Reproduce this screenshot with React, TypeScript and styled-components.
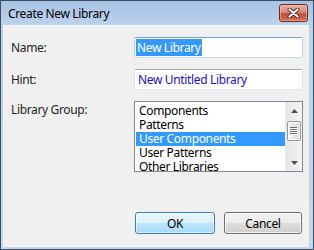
import React from "react";
import styled, { createGlobalStyle } from "styled-components";

const GlobalStyle = createGlobalStyle`
  html, body { margin: 0; padding: 0; background: #ffffff; }
  body { font-family: "Noto Sans", "Open Sans", sans-serif; font-size: 12px; color: #000; letter-spacing: -0.35px; }
  * { box-sizing: border-box; }
`;

const Window = styled.div`
  width: 314px;
  height: 250px;
  display: flex;
  flex-direction: column;
  border: 1px solid #3b4d63;
  padding: 0 4px 2px 2px;
  background: linear-gradient(to bottom, #a7c2e3 0px, #bcd2ec 24px, #c3d8ef 100%);
`;

const TitleBar = styled.div`
  height: 24px;
  display: flex;
  align-items: flex-start;
  justify-content: space-between;
  padding-left: 5px;
`;

const TitleText = styled.div`
  font-size: 12px;
  line-height: 16px;
  margin-top: 5px;
  color: #000;
`;

const CloseButton = styled.div`
  width: 29px;
  height: 18px;
  margin-top: 3px;
  margin-right: 1px;
  border: 1px solid #6e2a22;
  border-radius: 3px;
  background: linear-gradient(to bottom, #eab0a2 0%, #d98a78 45%, #c6503c 55%, #d06c54 100%);
  box-shadow: inset 0 0 0 1px rgba(255, 210, 200, 0.5);
  display: flex;
  align-items: center;
  justify-content: center;
`;

const Client = styled.div`
  flex: 1;
  background: #f0f0f0;
  display: flex;
  flex-direction: column;
  padding: 12px 6px 13px 8px;
`;

const Form = styled.div`
  display: grid;
  grid-template-columns: 123px 169px;
  row-gap: 11px;
`;

const Label = styled.div<{ $top?: boolean }>`
  font-size: 12px;
  line-height: 16px;
  align-self: ${(p) => (p.$top ? "start" : "center")};
  padding-top: ${(p) => (p.$top ? "1px" : "0")};
  color: #1e1e1e;
`;

const TextBox = styled.div<{ $focused?: boolean }>`
  height: 21px;
  border: 1px solid;
  border-radius: 2px;
  border-color: ${(p) =>
    p.$focused ? "#6fa6d6 #b5d3ec #c5def2 #b5d3ec" : "#abadb3 #dbdfe6 #e3e9ef #e2e3ea"};
  background: #ffffff;
  display: flex;
  align-items: center;
  padding-left: 1px;
  font-size: 12px;
`;

const Selected = styled.span`
  background: #3399ff;
  color: #ffffff;
  line-height: 17px;
  padding: 0 1px;
`;

const HintText = styled.span`
  color: #2211bb;
  line-height: 17px;
  padding-left: 2px;
`;

const ListBox = styled.div`
  height: 71px;
  border: 1px solid #828790;
  background: #ffffff;
  display: flex;
  overflow: hidden;
`;

const Items = styled.div`
  flex: 1;
  padding: 2px 0 0 1px;
  overflow: hidden;
`;

const Item = styled.div<{ $selected?: boolean }>`
  height: 14px;
  line-height: 14px;
  padding-left: 3px;
  font-size: 12px;
  white-space: nowrap;
  background: ${(p) => (p.$selected ? "#3399ff" : "transparent")};
  color: ${(p) => (p.$selected ? "#ffffff" : "#000000")};
`;

const ScrollBar = styled.div`
  width: 17px;
  display: flex;
  flex-direction: column;
  background: linear-gradient(to right, #e6e6e6, #f4f4f4);
  border-left: 1px solid #e9e9e9;
`;

const ArrowButton = styled.div`
  height: 17px;
  display: flex;
  align-items: center;
  justify-content: center;
`;

const Track = styled.div`
  flex: 1;
  display: flex;
  flex-direction: column;
  align-items: center;
`;

const Thumb = styled.div`
  width: 14px;
  height: 20px;
  margin-top: 2px;
  border: 1px solid #979797;
  border-radius: 2px;
  background: linear-gradient(to right, #f4f4f4, #e4e4e4 60%, #d6d6d6);
  box-shadow: inset 0 0 0 1px rgba(255, 255, 255, 0.8);
  display: flex;
  align-items: center;
  justify-content: center;
`;

const ButtonRow = styled.div`
  margin-top: auto;
  display: flex;
  justify-content: flex-end;
  gap: 9px;
  padding-right: 1px;
`;

const Button = styled.div<{ $default?: boolean; $w: number }>`
  width: ${(p) => p.$w}px;
  height: 22px;
  border: 1px solid ${(p) => (p.$default ? "#3c7fb1" : "#707070")};
  border-radius: 3px;
  background: ${(p) =>
    p.$default
      ? "linear-gradient(to bottom, #eaf6fd 0%, #d9f0fc 50%, #bee6fd 51%, #a7d9f5 100%)"
      : "linear-gradient(to bottom, #f2f2f2 0%, #ebebeb 50%, #dddddd 51%, #cfcfcf 100%)"};
  box-shadow: inset 0 0 0 1px ${(p) => (p.$default ? "rgba(255,255,255,0.6)" : "rgba(255,255,255,0.7)")};
  display: flex;
  align-items: center;
  justify-content: center;
  font-size: 12px;
  color: #000;
`;

const CloseGlyph = () => (
  <svg width="13" height="10" viewBox="0 0 13 10">
    <path d="M2.5 1.5 L10.5 8.5 M10.5 1.5 L2.5 8.5" stroke="#5b2119" strokeWidth="4" strokeLinecap="round" fill="none" />
    <path d="M2.5 1.5 L10.5 8.5 M10.5 1.5 L2.5 8.5" stroke="#ffffff" strokeWidth="2.2" strokeLinecap="round" fill="none" />
  </svg>
);

const UpArrow = () => (
  <svg width="7" height="4" viewBox="0 0 7 4">
    <path d="M3.5 0 L7 4 L0 4 Z" fill="#4e4e4e" />
  </svg>
);

const DownArrow = () => (
  <svg width="7" height="4" viewBox="0 0 7 4">
    <path d="M0 0 L7 0 L3.5 4 Z" fill="#4e4e4e" />
  </svg>
);

const Grip = () => (
  <svg width="8" height="8" viewBox="0 0 8 8">
    {[0, 2, 4, 6].map((y) => (
      <rect key={y} x="0" y={y} width="7" height="1" fill="#6f6f6f" />
    ))}
    {[1, 3, 5, 7].map((y) => (
      <rect key={y} x="1" y={y} width="7" height="1" fill="#ffffff" />
    ))}
  </svg>
);

const groups = ["Components", "Patterns", "User Components", "User Patterns", "Other Libraries"];

export default function App() {
  return (
    <>
      <GlobalStyle />
      <Window>
        <TitleBar>
          <TitleText>Create New Library</TitleText>
          <CloseButton>
            <CloseGlyph />
          </CloseButton>
        </TitleBar>
        <Client>
          <Form>
            <Label>Name:</Label>
            <TextBox $focused>
              <Selected>New Library</Selected>
            </TextBox>
            <Label>Hint:</Label>
            <TextBox>
              <HintText>New Untitled Library</HintText>
            </TextBox>
            <Label $top>Library Group:</Label>
            <ListBox>
              <Items>
                {groups.map((g) => (
                  <Item key={g} $selected={g === "User Components"}>
                    {g}
                  </Item>
                ))}
              </Items>
              <ScrollBar>
                <ArrowButton>
                  <UpArrow />
                </ArrowButton>
                <Track>
                  <Thumb>
                    <Grip />
                  </Thumb>
                </Track>
                <ArrowButton>
                  <DownArrow />
                </ArrowButton>
              </ScrollBar>
            </ListBox>
          </Form>
          <ButtonRow>
            <Button $default $w={80}>OK</Button>
            <Button $w={78}>Cancel</Button>
          </ButtonRow>
        </Client>
      </Window>
    </>
  );
}
